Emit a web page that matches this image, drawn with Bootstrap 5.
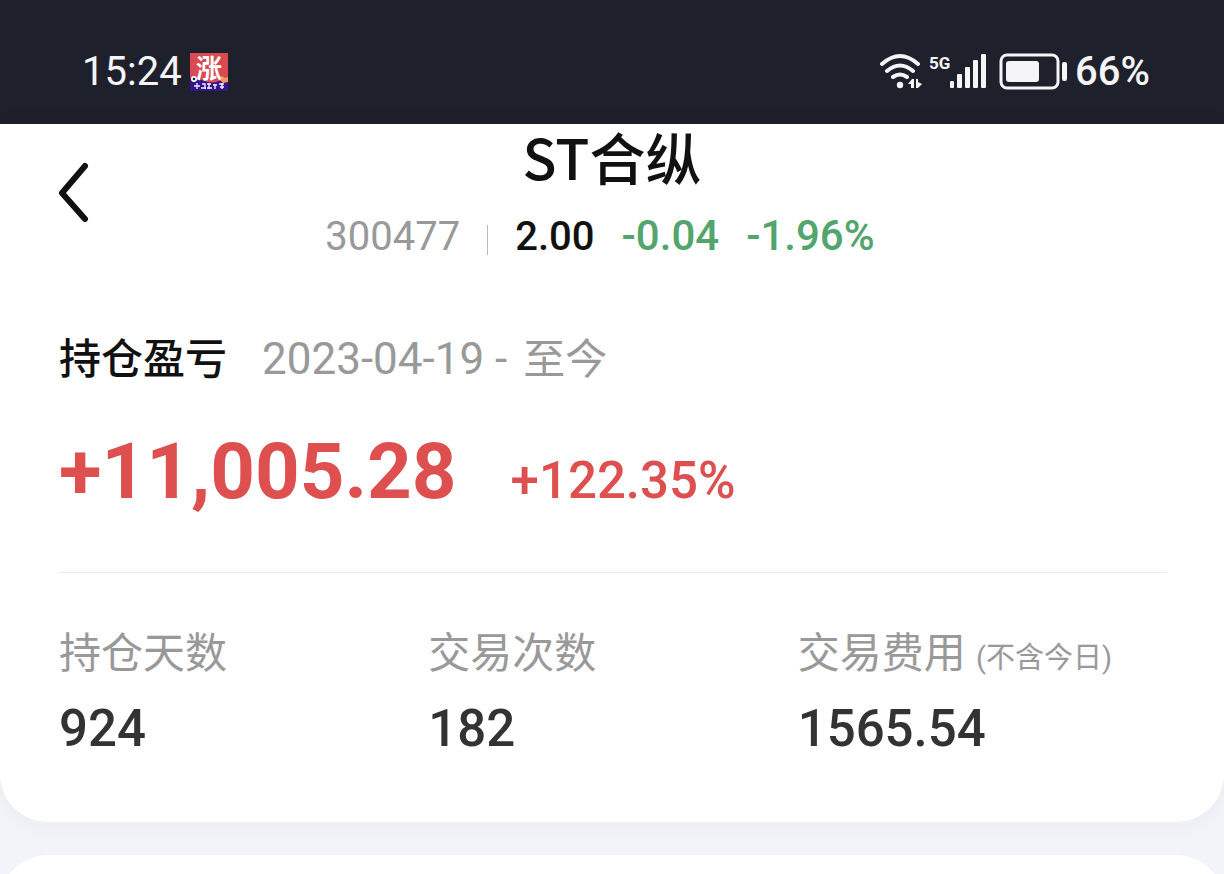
<!DOCTYPE html>
<html lang="zh-CN">
<head>
<meta charset="utf-8">
<meta name="viewport" content="width=device-width, initial-scale=1">
<title>ST合纵 持仓盈亏</title>
<link href="https://cdn.jsdelivr.net/npm/bootstrap@5.3.0/dist/css/bootstrap.min.css" rel="stylesheet">
<style>
  body { background: #f3f4f9; color: #111; font-family: Roboto, "Noto Sans CJK SC", sans-serif; }
  .medium { font-weight: 500; }
  .status-bar { background: #1e212b; color: #f5f5f7; height: 124px; padding: 20px 74px 0 82px; font-size: 40px; line-height: 48px; }
  .panel { background: #fff; }
  .summary { border-radius: 0 0 48px 48px; padding-bottom: 61px; box-shadow: 0 4px 32px rgba(30, 40, 60, .04); }
  .next-panel { margin-top: 33px; }
  .next-panel::before { content: ""; position: absolute; inset: 0 0 auto; height: 96px; background: #fff; border-radius: 48px 48px 0 0; }
  .side { width: 120px; }
  .back { padding: 38px 0 0 56px; }
  .stock-name { font-family: "Noto Sans CJK SC", sans-serif; font-size: 56px; line-height: 64px; font-weight: 500; }
  .quote { font-size: 40px; line-height: 48px; gap: 27px; margin-top: 24px; padding-right: 24px; }
  .quote-change { font-size: 42px; }
  .quote-rule { width: 1px; height: 30px; background: #bbb; margin-top: 13px; align-self: flex-start; }
  .inset { padding-left: 59px; padding-right: 57px; }
  .muted { color: #999; }
  .down { color: #52a56c; }
  .up { color: #de4f4f; }
  .caption { font-size: 42px; line-height: 56px; }
  .period { gap: 35px; margin-top: 70px; }
  .period-from { font-size: 44px; }
  .profit { gap: 54px; margin-top: 40px; line-height: 88px; }
  .profit-sum { font-size: 78px; }
  .profit-rate { font-size: 51px; }
  .rule { border-top: 1px solid #ebebeb; margin-top: 47px; padding-top: 53px; }
  .note { font-size: 29px; line-height: 1; }
  .figure-value { font-size: 51px; line-height: 64px; color: #333; font-weight: 500; margin: 15px 0 0; }
</style>
</head>
<body class="d-flex flex-column min-vh-100">
<header class="status-bar d-flex align-items-center justify-content-between">
  <div class="d-flex align-items-center gap-2">
    <span>15:24</span>
    <svg class="overflow-visible" width="38" height="38" viewBox="0 0 38 38" aria-hidden="true">
      <rect width="38" height="38" fill="#d94a52"/>
      <path d="M0 25 Q8 25 15 28 T29 28 L38 24 V38 H0Z" fill="#32168a"/>
      <path d="M29 26l3-3 3 2 3-1v5l-5 1z" fill="#ef9a63"/>
      <text x="6" y="25" font-family="Noto Sans CJK SC" font-weight="700" font-size="26" fill="#fff">涨</text>
      <circle cx="4" cy="26" r="3" fill="#fff"/><circle cx="4" cy="26" r="1.3" fill="#222"/>
      <path d="M4 33h6M7 30v6M12 31h3v5M11 35h5M17 31h4M19 30v6M17 35h5M23 32h4M25 31v5M29 31h5M30 34h4M32 30v6" stroke="#f3eaff" stroke-width="1.4" fill="none"/>
    </svg>
  </div>
  <div class="d-flex align-items-center">
    <svg class="me-1" width="194" height="38" viewBox="0 0 194 38" role="img" aria-label="Wi-Fi 5G 电池">
      <g fill="none" stroke="#f5f5f7" stroke-width="4" stroke-linecap="round">
        <path d="M5 11Q23-5 41 11M10 18Q23 7 36 18M16 24Q23 19 30 24"/>
      </g>
      <circle cx="23" cy="32" r="3.2" fill="#f5f5f7"/>
      <path d="M31 31l4-5h2v9h-3v-4zM39 26h2v3l4 2-4 4h-2z" fill="#f5f5f7"/>
      <text x="52" y="16" font-family="Roboto" font-weight="700" font-size="17" fill="#f5f5f7">5G</text>
      <g fill="#f5f5f7">
        <rect x="73" y="28" width="4" height="7" rx="1"/><rect x="80" y="21" width="5" height="14" rx="1"/><rect x="88" y="14" width="5" height="21" rx="1"/><rect x="96" y="7" width="5" height="28" rx="1"/><rect x="104" y="1" width="5" height="34" rx="1"/>
        <rect x="129" y="8" width="33" height="21" rx="3"/><rect x="185" y="9" width="5" height="19" rx="2"/>
      </g>
      <rect x="124" y="2" width="57" height="33" rx="6" fill="none" stroke="#f5f5f7" stroke-width="3"/>
    </svg>
    <span class="medium">66%</span>
  </div>
</header>

<main class="d-flex flex-column flex-grow-1">
  <section class="panel summary">
    <div class="d-flex">
      <div class="side">
        <button type="button" class="btn border-0 rounded-0 back" aria-label="返回">
          <svg class="d-block" width="36" height="60" viewBox="0 0 36 60"><path d="M29 4L6 31 29 57" fill="none" stroke="#111" stroke-width="6" stroke-linecap="round" stroke-linejoin="round"/></svg>
        </button>
      </div>
      <div class="flex-grow-1 text-center">
        <h1 class="stock-name mb-0">ST合纵</h1>
        <div class="quote d-flex justify-content-center align-items-baseline">
          <span class="muted">300477</span>
          <span class="quote-rule"></span>
          <span class="medium">2.00</span>
          <span class="quote-change medium down">-0.04</span>
          <span class="quote-change medium down">-1.96%</span>
        </div>
      </div>
      <div class="side"></div>
    </div>

    <div class="inset">
      <div class="period caption d-flex align-items-baseline">
        <h2 class="caption medium mb-0">持仓盈亏</h2>
        <span class="muted"><span class="period-from">2023-04-19 -</span><span class="ms-3">至今</span></span>
      </div>
      <div class="profit up d-flex align-items-baseline">
        <strong class="profit-sum">+11,005.28</strong>
        <span class="profit-rate medium">+122.35%</span>
      </div>
      <dl class="rule row g-0 mb-0">
        <div class="col-4">
          <dt class="caption muted fw-normal">持仓天数</dt>
          <dd class="figure-value">924</dd>
        </div>
        <div class="col-4">
          <dt class="caption muted fw-normal">交易次数</dt>
          <dd class="figure-value">182</dd>
        </div>
        <div class="col-4">
          <dt class="caption muted fw-normal text-nowrap">交易费用 <span class="note">(不含今日)</span></dt>
          <dd class="figure-value">1565.54</dd>
        </div>
      </dl>
    </div>
  </section>
  <section class="next-panel position-relative flex-grow-1 overflow-hidden"></section>
</main>
<script src="https://cdn.jsdelivr.net/npm/bootstrap@5.3.0/dist/js/bootstrap.bundle.min.js"></script>
</body>
</html>
